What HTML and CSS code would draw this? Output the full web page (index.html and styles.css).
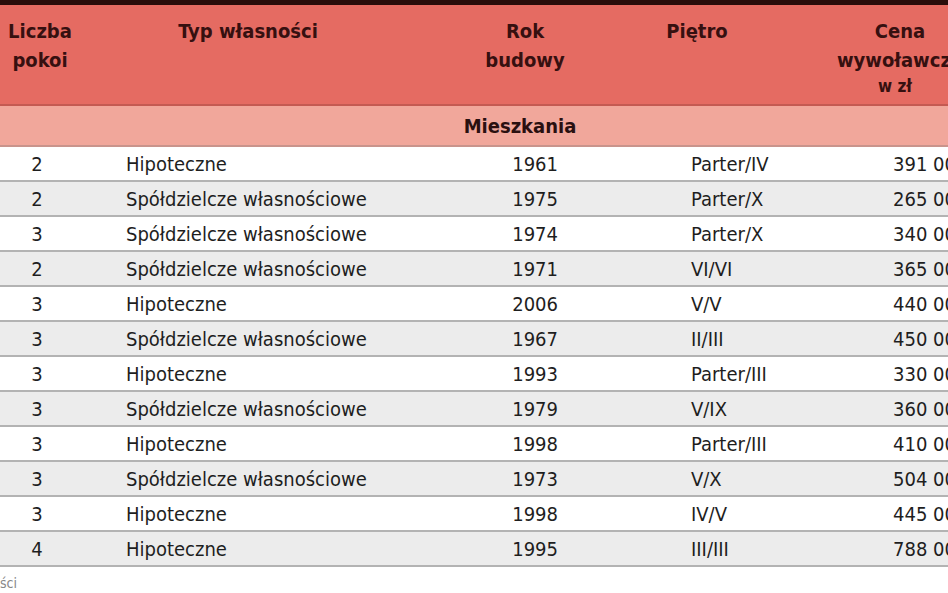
FILE: index.html
```html
<!DOCTYPE html>
<html lang="pl">
<head>
<meta charset="utf-8">
<link rel="stylesheet" href="styles.css">
</head>
<body>
<div class="page">
  <div class="topbar"></div>
  <table class="tbl">
    <colgroup>
      <col class="c1"><col class="c2"><col class="c3"><col class="c4"><col class="c5">
    </colgroup>
    <thead>
      <tr class="head">
        <th>Liczba<br>pokoi</th>
        <th>Typ własności</th>
        <th>Rok<br>budowy</th>
        <th>Piętro</th>
        <th>Cena<br>wywoławcza<br><span class="unit">w zł</span></th>
      </tr>
      <tr class="section"><th colspan="5">Mieszkania</th></tr>
    </thead>
    <tbody>
      <tr><td class="n">2</td><td class="t">Hipoteczne</td><td class="y">1961</td><td class="f">Parter/IV</td><td class="p">391 000</td></tr>
      <tr class="alt"><td class="n">2</td><td class="t">Spółdzielcze własnościowe</td><td class="y">1975</td><td class="f">Parter/X</td><td class="p">265 000</td></tr>
      <tr><td class="n">3</td><td class="t">Spółdzielcze własnościowe</td><td class="y">1974</td><td class="f">Parter/X</td><td class="p">340 000</td></tr>
      <tr class="alt"><td class="n">2</td><td class="t">Spółdzielcze własnościowe</td><td class="y">1971</td><td class="f">VI/VI</td><td class="p">365 000</td></tr>
      <tr><td class="n">3</td><td class="t">Hipoteczne</td><td class="y">2006</td><td class="f">V/V</td><td class="p">440 000</td></tr>
      <tr class="alt"><td class="n">3</td><td class="t">Spółdzielcze własnościowe</td><td class="y">1967</td><td class="f">II/III</td><td class="p">450 000</td></tr>
      <tr><td class="n">3</td><td class="t">Hipoteczne</td><td class="y">1993</td><td class="f">Parter/III</td><td class="p">330 000</td></tr>
      <tr class="alt"><td class="n">3</td><td class="t">Spółdzielcze własnościowe</td><td class="y">1979</td><td class="f">V/IX</td><td class="p">360 000</td></tr>
      <tr><td class="n">3</td><td class="t">Hipoteczne</td><td class="y">1998</td><td class="f">Parter/III</td><td class="p">410 000</td></tr>
      <tr class="alt"><td class="n">3</td><td class="t">Spółdzielcze własnościowe</td><td class="y">1973</td><td class="f">V/X</td><td class="p">504 000</td></tr>
      <tr><td class="n">3</td><td class="t">Hipoteczne</td><td class="y">1998</td><td class="f">IV/V</td><td class="p">445 000</td></tr>
      <tr class="alt"><td class="n">4</td><td class="t">Hipoteczne</td><td class="y">1995</td><td class="f">III/III</td><td class="p">788 000</td></tr>
    </tbody>
  </table>
  <div class="note">ści</div>
</div>
</body>
</html>
```
FILE: styles.css
```css
html, body {
  margin: 0;
  padding: 0;
  background: #ffffff;
}
body {
  width: 948px;
  height: 593px;
  overflow: hidden;
  font-family: "Liberation Sans Narrow", "DejaVu Sans Condensed", "Liberation Sans", sans-serif;
}
.page {
  width: 1040px;
}
.topbar {
  height: 5px;
  background: #2a0d0b;
}
.tbl {
  width: 1040px;
  table-layout: fixed;
  border-collapse: collapse;
}
.c1 { width: 80px; }
.c2 { width: 336px; }
.c3 { width: 218px; }
.c4 { width: 126px; }
.c5 { width: 280px; }

.head th {
  height: 99px;
  background: #e56b62;
  color: #361010;
  font-size: 20px;
  font-weight: bold;
  line-height: 29px;
  vertical-align: top;
  text-align: center;
  padding: 12px 0 0;
  border-bottom: 2px solid #c45a52;
  box-sizing: border-box;
}
.head .unit {
  font-size: 17px;
  line-height: 22px;
  display: inline-block;
  vertical-align: top;
  margin-right: 10px;
}
.section th {
  height: 41px;
  background: #f1a79b;
  color: #2a1010;
  font-size: 20px;
  font-weight: bold;
  text-align: center;
  padding: 0;
  border-bottom: 2px solid #c9948c;
  box-sizing: border-box;
}
.tbl td {
  height: 35px;
  padding: 0;
  font-size: 20px;
  color: #1e1e1e;
  border-bottom: 2px solid #b3b3b3;
  box-sizing: border-box;
  white-space: nowrap;
}
tr.alt td {
  background: #ececec;
}
.n { text-align: center; padding-right: 6px !important; }
.t { padding-left: 46px !important; }
.y { text-align: right; padding-right: 76px !important; }
.f { padding-left: 57px !important; }
.p { padding-left: 133px !important; }
.note {
  margin-top: 8px;
  font-size: 14px;
  color: #888888;
  padding-left: 0;
}
```
